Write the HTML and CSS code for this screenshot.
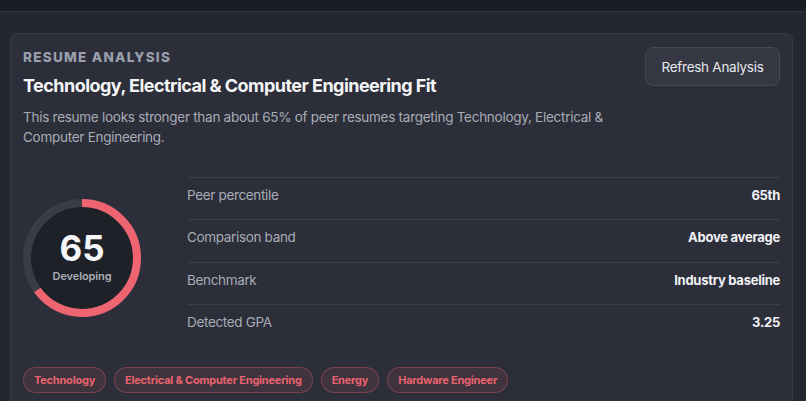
FILE: index.html
```html
<!DOCTYPE html>
<html lang="en">
<head>
<meta charset="utf-8">
<title>Resume Analysis</title>
<link rel="stylesheet" href="styles.css">
</head>
<body>
<div class="topbar"></div>
<main class="page">
  <section class="card">
    <div class="head">
      <div class="head-text">
        <div class="eyebrow">RESUME ANALYSIS</div>
        <h1 class="title">Technology, Electrical &amp; Computer Engineering Fit</h1>
        <p class="desc">This resume looks stronger than about 65% of peer resumes targeting Technology, Electrical &amp; Computer Engineering.</p>
      </div>
      <button class="btn">Refresh Analysis</button>
    </div>
    <div class="body">
      <div class="gauge">
        <svg width="118" height="118" viewBox="0 0 118 118">
          <circle cx="59" cy="59" r="51" fill="#1f2129"/>
          <circle cx="59" cy="59" r="55" fill="none" stroke="#3a3d48" stroke-width="8"/>
          <circle cx="59" cy="59" r="55" fill="none" stroke="#ee6470" stroke-width="8" stroke-dasharray="224.62 345.58" transform="rotate(-90 59 59)"/>
        </svg>
        <div class="gauge-label">
          <div class="score">65</div>
          <div class="level">Developing</div>
        </div>
      </div>
      <div class="stats">
        <div class="row"><span class="k">Peer percentile</span><span class="v">65th</span></div>
        <div class="row"><span class="k">Comparison band</span><span class="v">Above average</span></div>
        <div class="row"><span class="k">Benchmark</span><span class="v">Industry baseline</span></div>
        <div class="row"><span class="k">Detected GPA</span><span class="v">3.25</span></div>
      </div>
    </div>
    <div class="tags">
      <span class="tag">Technology</span>
      <span class="tag">Electrical &amp; Computer Engineering</span>
      <span class="tag">Energy</span>
      <span class="tag">Hardware Engineer</span>
    </div>
  </section>
</main>
</body>
</html>
```
FILE: styles.css
```css
* { box-sizing: border-box; }
html, body { margin: 0; padding: 0; }
body {
  background: #252730;
  font-family: Inter, "Noto Sans", sans-serif;
  color: #f1f2f5;
  width: 806px;
  height: 401px;
  overflow: hidden;
}
.topbar {
  height: 12px;
  background: #1b1d24;
  border-bottom: 1px solid #31343e;
}
.page {
  padding: 21px 13px 0 10px;
}
.card {
  background: #2c2e39;
  border: 1px solid #393c47;
  border-radius: 7px;
  padding: 13px 12px 20px 12px;
}
.head {
  display: flex;
  justify-content: space-between;
  align-items: flex-start;
  gap: 16px;
}
.head-text { flex: 1; }
.eyebrow {
  font-size: 13.5px;
  font-weight: 800;
  letter-spacing: 0.095em;
  color: #9a9fad;
  line-height: 18px;
  margin-top: 1px;
}
.title {
  margin: 8px 0 0;
  font-size: 18px;
  font-weight: 700;
  line-height: 24px;
  color: #f4f5f7;
  letter-spacing: -0.03em;
}
.desc {
  margin: 10px 0 0;
  font-size: 13.5px;
  letter-spacing: -0.02em;
  line-height: 19.5px;
  color: #a8acb7;
  max-width: 600px;
}
.btn {
  flex: none;
  margin-top: 0;
  width: 135px;
  height: 39px;
  background: #353843;
  border: 1px solid #464955;
  border-radius: 8px;
  color: #e7e8ec;
  font-family: inherit;
  font-size: 13.5px;
  letter-spacing: -0.02em;
  padding: 0;
}
.body {
  display: flex;
  align-items: flex-start;
  gap: 46px;
  margin-top: 30px;
}
.gauge {
  position: relative;
  width: 118px;
  height: 118px;
  flex: none;
  margin-top: 22px;
}
.gauge svg { display: block; }
.gauge-label {
  position: absolute;
  inset: 0;
  display: flex;
  flex-direction: column;
  align-items: center;
  justify-content: center;
}
.score {
  font-size: 35px;
  font-weight: 700;
  line-height: 38px;
  color: #f5f6f8;
  margin-top: -5px;
}
.level {
  font-size: 11px;
  font-weight: 600;
  letter-spacing: -0.01em;
  color: #a8acb7;
  margin-top: 2px;
}
.stats { flex: 1; }
.row {
  display: flex;
  justify-content: space-between;
  align-items: center;
  height: 42.3px;
  padding-bottom: 7px;
  border-top: 1px solid #3c3f4a;
  font-size: 13.5px;
  letter-spacing: -0.025em;
}
.k { color: #a8acb7; }
.v { color: #f1f2f5; font-weight: 700; font-size: 13px; letter-spacing: -0.02em; }
.tags {
  display: flex;
  gap: 8px;
  margin-top: 21px;
}
.tag {
  height: 26px;
  display: inline-flex;
  align-items: center;
  padding: 0 10px;
  border-radius: 13px;
  background: rgba(238, 100, 112, 0.1);
  border: 1px solid rgba(238, 100, 112, 0.33);
  color: #e8646f;
  font-size: 11px;
  font-weight: 700;
  letter-spacing: -0.02em;
}
```
